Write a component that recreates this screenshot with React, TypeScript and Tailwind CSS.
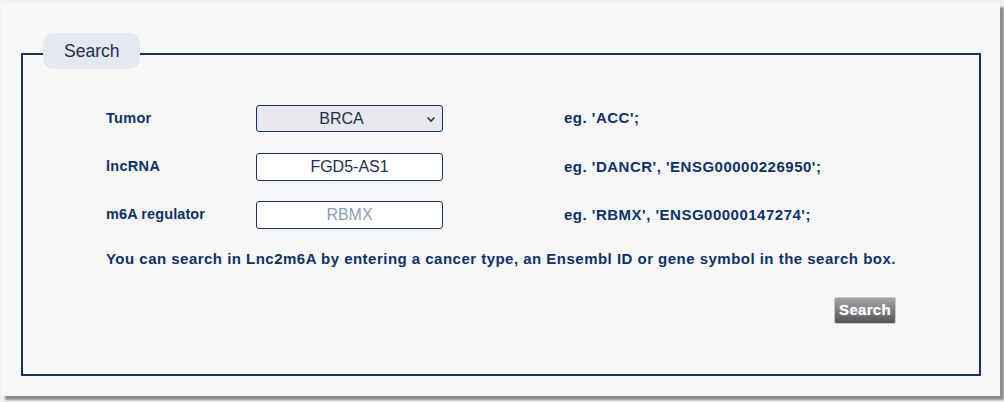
import React from "react";

export default function App() {
  const font = { fontFamily: '"Liberation Sans", Arial, sans-serif' };
  return (
    <div className="w-[1004px] h-[402px] bg-[#f0f0f0] pt-[3px] pl-[1px]" style={font}>
      <div className="w-[999px] h-[393px] bg-[#f7f7f7] shadow-[4px_4px_2px_#8c8c8c] pt-[33px] pl-[20px]">
        <fieldset className="w-[960px] h-[340px] border-2 border-[#17305f] m-0 p-0">
          <legend className="ml-[20px] px-[21px] h-[36px] bg-[#e5e8f0] rounded-[10px] text-[17.5px] text-[#1f2d50] leading-[36px] -translate-y-[3px]">
            Search
          </legend>
          <div className="pl-[83px] pt-[33px] text-[#0e3166] font-bold text-[14.5px]">
            <div className="flex items-center h-[27px]">
              <div className="w-[150px] tracking-[0.3px]">Tumor</div>
              <div className="relative w-[187px] h-[27px] border border-[#12366b] rounded-[3px] bg-[#e8e8ee] flex items-center justify-center pr-[16px] font-normal text-[16px] text-[#1f2d50]">
                BRCA
                <svg className="absolute right-[6px] top-[10px]" width="10" height="7" viewBox="0 0 10 7">
                  <path d="M1.5 1.5 L5 5 L8.5 1.5" stroke="#1f3a68" strokeWidth="1.6" fill="none" />
                </svg>
              </div>
              <div className="ml-[121px] text-[15px] tracking-[0.5px]">eg. 'ACC';</div>
            </div>
            <div className="flex items-center h-[28px] mt-[21px]">
              <div className="w-[150px] tracking-[0.3px]">lncRNA</div>
              <div className="w-[187px] h-[28px] border border-[#12366b] rounded-[3px] bg-white flex items-center justify-center font-normal text-[16px] text-[#1f2d50]">
                FGD5-AS1
              </div>
              <div className="ml-[121px] text-[15px] tracking-[0.5px]">eg. 'DANCR', 'ENSG00000226950';</div>
            </div>
            <div className="flex items-center h-[28px] mt-[20px]">
              <div className="w-[150px] tracking-[0.1px]">m6A regulator</div>
              <div className="w-[187px] h-[28px] border border-[#12366b] rounded-[3px] bg-white flex items-center justify-center font-normal text-[16px] text-[#8d9db3]">
                RBMX
              </div>
              <div className="ml-[121px] text-[15px] tracking-[0.5px]">eg. 'RBMX', 'ENSG00000147274';</div>
            </div>
            <div className="mt-[20px] leading-[20px] text-[15px] tracking-[0.48px]">
              You can search in Lnc2m6A by entering a cancer type, an Ensembl ID or gene symbol in the search box.
            </div>
            <div className="flex mt-[28px] pl-[728px]">
              <div className="w-[62px] h-[27px] rounded-[2px] border border-[#c8c8c8] bg-gradient-to-b from-[#a6a6a6] to-[#555555] text-white text-[15px] tracking-[0.3px] font-bold flex items-center justify-center [text-shadow:0_0_1px_#cfe0ff]">
                Search
              </div>
            </div>
          </div>
        </fieldset>
      </div>
    </div>
  );
}
